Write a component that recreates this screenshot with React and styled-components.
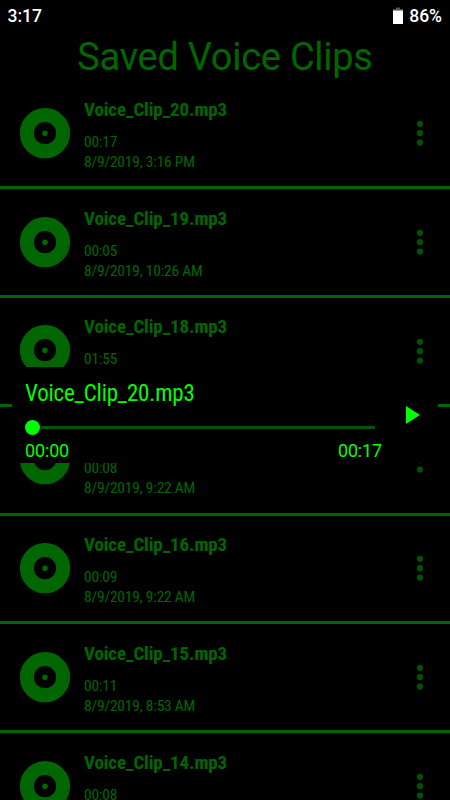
import React from "react"
import styled, { createGlobalStyle } from "styled-components"

const clips = [
  { name: "Voice_Clip_20.mp3", length: "00:17", date: "8/9/2019, 3:16 PM" },
  { name: "Voice_Clip_19.mp3", length: "00:05", date: "8/9/2019, 10:26 AM" },
  { name: "Voice_Clip_18.mp3", length: "01:55", date: "8/9/2019, 9:30 AM" },
  { name: "Voice_Clip_17.mp3", length: "00:08", date: "8/9/2019, 9:22 AM" },
  { name: "Voice_Clip_16.mp3", length: "00:09", date: "8/9/2019, 9:22 AM" },
  { name: "Voice_Clip_15.mp3", length: "00:11", date: "8/9/2019, 8:53 AM" },
  { name: "Voice_Clip_14.mp3", length: "00:08", date: "8/9/2019, 8:52 AM" },
]

const Disc = () => (
  <svg width="50" height="51" viewBox="0 0 50 51">
    <circle cx="25" cy="25.2" r="18.1" fill="none" stroke="#006700" strokeWidth="14" />
    <circle cx="25" cy="25.2" r="2.8" fill="#006700" />
  </svg>
)

const Dots = () => (
  <svg width="8" height="26" viewBox="0 0 8 26">
    <circle cx="4" cy="3.8" r="3.1" />
    <circle cx="4" cy="13.2" r="3.1" />
    <circle cx="4" cy="22.6" r="3.1" />
  </svg>
)

const Battery = () => (
  <svg width="10" height="17" viewBox="0 0 10 17">
    <path d="M3 0.5H7V2H10V4H0V2H3Z" fill="#555" />
    <rect y="3.6" width="10" height="13.4" fill="#fff" />
  </svg>
)

const App = () => {
  return (
    <Screen>
      <GlobalStyle />
      <StatusBar>
        <span>3:17</span>
        <BatteryStatus>
          <Battery />
          <span>86%</span>
        </BatteryStatus>
      </StatusBar>
      <Heading>Saved Voice Clips</Heading>
      <ClipList>
        {clips.map(clip => (
          <Clip key={clip.name}>
            <Disc />
            <ClipText>
              <ClipName>{clip.name}</ClipName>
              <ClipDetail>{clip.length}</ClipDetail>
              <ClipDetail>{clip.date}</ClipDetail>
            </ClipText>
            <MenuButton aria-label="Options">
              <Dots />
            </MenuButton>
          </Clip>
        ))}
      </ClipList>
      <Player>
        <PlayerMain>
          <PlayerName>{clips[0].name}</PlayerName>
          <Seek>
            <Thumb />
            <Track />
          </Seek>
          <Times>
            <span>00:00</span>
            <span>{clips[0].length}</span>
          </Times>
        </PlayerMain>
        <PlayButton aria-label="Play">
          <svg width="14" height="18" viewBox="0 0 14 18">
            <path d="M0 0L14 9L0 18Z" fill="#00ff00" />
          </svg>
        </PlayButton>
      </Player>
    </Screen>
  )
}

export default App

const GlobalStyle = createGlobalStyle`
  body {
    margin: 0;
    background: #000;
    overflow: hidden;
  }
`

const Screen = styled.div`
  position: relative;
  width: 450px;
  height: 800px;
  overflow: hidden;
  background: #000;
  color: #006700;
  font-family: "Roboto", sans-serif;
`

const StatusBar = styled.div`
  display: flex;
  justify-content: space-between;
  align-items: center;
  height: 32px;
  padding: 0 8px 0 7.5px;
  color: #fff;
  font-size: 17.5px;
  font-weight: 500;
`

const BatteryStatus = styled.div`
  display: flex;
  align-items: center;
  gap: 5px;

  svg {
    margin: 0 1px 2px 0;
  }
`

const Heading = styled.h1`
  margin: 0;
  height: 48.4px;
  line-height: 50px;
  font-size: 38px;
  font-weight: 400;
  letter-spacing: -0.27px;
  text-align: center;
`

const ClipList = styled.ul`
  margin: 0;
  padding: 0;
  list-style: none;
`

const Clip = styled.li`
  display: flex;
  align-items: center;
  box-sizing: border-box;
  height: 108.8px;
  padding: 0 26px 0 20px;
  border-bottom: 3px solid #006700;
`

const ClipText = styled.div`
  flex: 1;
  padding: 3px 0 0 14px;
  font-family: "Roboto Condensed", "Roboto", sans-serif;
  font-stretch: 75%;
`

const ClipName = styled.div`
  margin-bottom: 10px;
  line-height: 24px;
  font-size: 19px;
  font-weight: 700;
  letter-spacing: -0.14px;
`

const ClipDetail = styled.div`
  line-height: 20px;
  font-size: 15.5px;
  letter-spacing: -0.22px;
`

const MenuButton = styled.button`
  display: flex;
  padding: 0;
  border: 0;
  background: none;
  fill: #005300;
`

const Player = styled.div`
  position: absolute;
  top: 367px;
  left: 12px;
  display: flex;
  align-items: center;
  box-sizing: border-box;
  width: 426px;
  height: 96px;
  padding: 0 18px 0 13px;
  background: #000;
  color: #00ff00;
`

const PlayerMain = styled.div`
  width: 357px;
  padding-top: 10px;
`

const PlayerName = styled.div`
  line-height: 30px;
  font-family: "Roboto Condensed", "Roboto", sans-serif;
  font-size: 23px;
  font-stretch: 75%;
  letter-spacing: -0.2px;
`

const Seek = styled.div`
  display: flex;
  align-items: center;
  gap: 1px;
  height: 36px;
  margin-right: 7px;
`

const Thumb = styled.div`
  width: 15px;
  height: 15px;
  border-radius: 50%;
  background: #00ff00;
`

const Track = styled.div`
  flex: 1;
  height: 3px;
  background: #005300;
`

const Times = styled.div`
  display: flex;
  justify-content: space-between;
  margin-top: -4px;
  line-height: 20px;
  font-size: 18px;
  letter-spacing: -0.15px;
`

const PlayButton = styled.button`
  display: flex;
  margin-left: 24px;
  padding: 0;
  border: 0;
  background: none;
`
